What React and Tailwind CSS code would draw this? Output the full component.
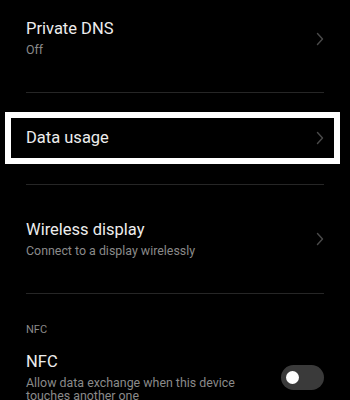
function Chevron() {
  return (
    <svg width="8" height="14" viewBox="0 0 8 14" className="shrink-0">
      <path d="M1.5 1.5 L6.5 7 L1.5 12.5" fill="none" stroke="#4a4a4a" strokeWidth="1.4" strokeLinecap="round" strokeLinejoin="round" />
    </svg>
  );
}

function Divider() {
  return <div className="mx-[26px] h-px bg-[#262626]" />;
}

export default function App() {
  return (
    <div className="w-[350px] h-[400px] overflow-hidden bg-black font-['Roboto',sans-serif]">
      {/* Private DNS */}
      <div className="flex items-start justify-between pl-[26px] pr-[26px] pt-[19px] h-[92px]">
        <div>
          <div className="text-[16.5px] leading-[20px] text-[#ededed]">Private DNS</div>
          <div className="mt-[3px] text-[12.4px] leading-[16px] text-[#8a8a8a]">Off</div>
        </div>
        <div className="mt-[13px]">
          <Chevron />
        </div>
      </div>
      <Divider />

      {/* Data usage - highlighted */}
      <div className="mt-[19px] mx-[5px] w-[335px] h-[52px] border-[6px] border-white flex items-center justify-between pl-[15px] pr-[10px]">
        <div className="text-[16.5px] leading-[20px] text-[#ededed]">Data usage</div>
        <Chevron />
      </div>
      <div className="h-[20px]" />
      <Divider />

      {/* Wireless display */}
      <div className="flex items-center justify-between pl-[26px] pr-[26px] h-[108px]">
        <div>
          <div className="text-[16.5px] leading-[20px] text-[#ededed]">Wireless display</div>
          <div className="mt-[3px] text-[12.4px] leading-[16px] text-[#8a8a8a]">Connect to a display wirelessly</div>
        </div>
        <Chevron />
      </div>
      <Divider />

      {/* NFC section */}
      <div className="pl-[26px] pt-[29px] text-[11px] leading-[14px] text-[#8a8a8a]">NFC</div>
      <div className="flex items-center justify-between pl-[26px] pr-[26px] mt-[15px]">
        <div className="w-[240px]">
          <div className="text-[16.5px] leading-[20px] text-[#ededed]">NFC</div>
          <div className="mt-[4px] text-[12.4px] leading-[13px] text-[#8a8a8a]">Allow data exchange when this device touches another one</div>
        </div>
        <div className="w-[43px] h-[25px] rounded-full bg-[#3a3a3a] flex items-center pl-[5px]">
          <div className="w-[13px] h-[13px] rounded-full bg-white" />
        </div>
      </div>
    </div>
  );
}
